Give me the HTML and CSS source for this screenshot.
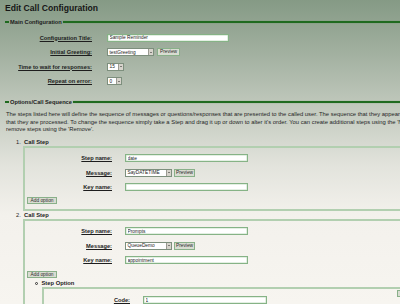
FILE: index.html
```html
<!DOCTYPE html>
<html lang="en">
<head>
  <meta charset="UTF-8">
  <meta name="viewport" content="width=device-width, initial-scale=1.0">
  <title>Edit Call Configuration</title>
  <link rel="stylesheet" href="styles.css">
</head>
<body>
  <div class="page">
    <h1>Edit Call Configuration</h1>

    <div class="legend">
      <span class="tick"></span>
      <span class="legend-text">Main Configuration</span>
      <span class="rule"></span>
    </div>
    <div class="main-form">
      <div class="row">
        <label>Configuration Title:</label>
        <input class="text-input" type="text" value="Sample Reminder">
      </div>
      <div class="row">
        <label>Initial Greeting:</label>
        <div class="select greeting"><span>testGreeting</span><span class="arrow"></span></div>
        <button class="btn preview">Preview</button>
      </div>
      <div class="row">
        <label>Time to wait for responses:</label>
        <div class="select small"><span>15</span><span class="arrow"></span></div>
      </div>
      <div class="row">
        <label>Repeat on error:</label>
        <div class="select tiny"><span>0</span><span class="arrow"></span></div>
      </div>
    </div>

    <div class="legend second">
      <span class="tick"></span>
      <span class="legend-text">Options/Call Sequence</span>
      <span class="rule"></span>
    </div>
    <p class="intro">The steps listed here will define the sequence of messages or questions/responses that are presented to the called user. The sequence that they appear here is the order<br>that they are processed. To change the sequence simply take a Step and drag it up or down to alter it's order. You can create additional steps using the 'New' button or<br>remove steps using the 'Remove'.</p>

    <div class="step-head"><span class="num">1.</span><span class="step-title">Call Step</span></div>
    <div class="step-box">
      <div class="row step-row">
        <label>Step name:</label>
        <input class="text-input" type="text" value="date">
      </div>
      <div class="row step-row">
        <label>Message:</label>
        <div class="select greeting"><span>SayDATETIME</span><span class="arrow"></span></div>
        <button class="btn preview narrow">Preview</button>
      </div>
      <div class="row step-row">
        <label>Key name:</label>
        <input class="text-input" type="text" value="">
      </div>
      <button class="btn add-option">Add option</button>
    </div>

    <div class="step-head"><span class="num">2.</span><span class="step-title">Call Step</span></div>
    <div class="step-box last">
      <div class="row step-row">
        <label>Step name:</label>
        <input class="text-input" type="text" value="Prompts">
      </div>
      <div class="row step-row">
        <label>Message:</label>
        <div class="select greeting"><span>QueueDemo</span><span class="arrow"></span></div>
        <button class="btn preview narrow">Preview</button>
      </div>
      <div class="row step-row">
        <label>Key name:</label>
        <input class="text-input" type="text" value="appointment">
      </div>
      <button class="btn add-option">Add option</button>

      <div class="option-head"><span class="bullet"></span><span class="step-title">Step Option</span></div>
      <div class="option-box">
        <div class="option-rows">
          <div class="row option-row">
            <label>Code:</label>
            <input class="text-input" type="text" value="1">
          </div>
        </div>
        <button class="btn remove">Remove</button>
      </div>
    </div>
  </div>
</body>
</html>
```

FILE: styles.css
```css
body {
  margin: 0;
  width: 400px;
  height: 304px;
  overflow: hidden;
  background: linear-gradient(#859a85 0, #a3b1a1 55px, #c0c8bc 105px, #e2e3dc 165px, #f3f1ec 215px, #f7f5f0 304px);
  font-family: 'Liberation Sans', Arial, sans-serif;
  color: #1d1d1d;
}
.page {
  width: 640px;
}
h1 {
  margin: 0;
  padding: 2px 0 0 5px;
  font-size: 8.6px;
  line-height: 12px;
  font-weight: 700;
  color: #161616;
}
.legend {
  display: flex;
  align-items: center;
  height: 10px;
  margin-top: 2.5px;
}
.legend.second {
  margin-top: 8.25px;
}
.tick {
  width: 4px;
  height: 2px;
  margin-left: 5px;
  background-color: #1f6a1f;
}
.legend-text {
  font-size: 5.7px;
  font-weight: 700;
  padding: 0 1.5px 0 1px;
}
.rule {
  flex: 1;
  height: 2px;
  background-color: #1f6a1f;
  box-shadow: 0 0 1px #4f8f4f;
}
.main-form {
  margin-top: 3.75px;
}
.row {
  display: flex;
  align-items: center;
  height: 14.5px;
}
.row label {
  width: 92px;
  margin-right: 15px;
  text-align: right;
  font-size: 5.7px;
  font-weight: 700;
  text-decoration: underline;
  white-space: nowrap;
}
.text-input {
  box-sizing: border-box;
  width: 122px;
  height: 8px;
  margin: 0;
  padding: 0 1.5px;
  border: 1px solid #86b386;
  box-shadow: inset 0 0 0 0.5px #c8dfc8;
  background-color: #fff;
  font-family: 'Liberation Sans', Arial, sans-serif;
  font-size: 4.8px;
  color: #222;
  outline: none;
}
.select {
  box-sizing: border-box;
  display: flex;
  align-items: center;
  justify-content: space-between;
  height: 8px;
  padding-left: 1.5px;
  border: 1px solid #7d8f7d;
  background-color: #fff;
  font-size: 4.8px;
  color: #222;
}
.select.greeting {
  width: 47px;
}
.select.small {
  width: 17px;
}
.select.tiny {
  width: 15px;
}
.arrow {
  box-sizing: border-box;
  width: 5px;
  height: 6px;
  background-color: #d6d3cb;
  border-left: 0.5px solid #9a9a92;
  display: flex;
  align-items: center;
  justify-content: center;
}
.arrow::after {
  content: '';
  border-left: 1.3px solid transparent;
  border-right: 1.3px solid transparent;
  border-top: 1.5px solid #222;
}
.btn {
  box-sizing: border-box;
  height: 8px;
  margin: 0;
  padding: 0;
  border: 1px solid #89b089;
  background-color: #d8dcd1;
  font-family: 'Liberation Sans', Arial, sans-serif;
  font-size: 4.8px;
  color: #2a2a2a;
  line-height: 6px;
  cursor: pointer;
}
.btn:hover {
  background-color: #e6e9e0;
}
.preview {
  width: 23px;
  margin-left: 3px;
}
.preview.narrow {
  width: 21px;
  margin-left: 2px;
}
.intro {
  margin: 4.8px 0 0;
  padding-left: 6px;
  font-size: 5.85px;
  line-height: 7.3px;
  white-space: nowrap;
  color: #262626;
}
.step-head {
  display: flex;
  align-items: center;
  height: 8px;
  padding-left: 16px;
  margin-top: 4.8px;
}
.step-box + .step-head {
  margin-top: 0;
}
.num {
  width: 8px;
  font-size: 5.7px;
}
.step-title {
  font-size: 5.8px;
  font-weight: 700;
}
.step-box {
  margin-left: 23px;
  padding: 3.25px 0 4.5px;
  border: 2px solid #b2cfb0;
}
.step-row label {
  width: 87px;
  margin-right: 13px;
}
.step-row .text-input {
  width: 123px;
}
.add-option {
  display: block;
  width: 30px;
  height: 7px;
  margin: 2.75px 0 0 2px;
}
.step-box.last .add-option {
  margin-top: 3px;
}
.option-head {
  display: flex;
  align-items: center;
  height: 8px;
  margin-top: 1.5px;
  padding-left: 10px;
}
.bullet {
  box-sizing: border-box;
  width: 3px;
  height: 3px;
  margin-right: 3.5px;
  border: 0.7px solid #333;
  border-radius: 50%;
}
.option-box {
  display: flex;
  align-items: flex-start;
  margin-left: 17px;
  padding-top: 1px;
  height: 40px;
  border-top: 2px solid #b2cfb0;
  border-left: 2px solid #b2cfb0;
}
.option-rows {
  width: 353px;
  padding-top: 2.75px;
}
.option-row label {
  width: 86px;
  margin-right: 13px;
}
.option-row .text-input {
  width: 124px;
}
.remove {
  width: 30px;
  height: 7px;
}
```
